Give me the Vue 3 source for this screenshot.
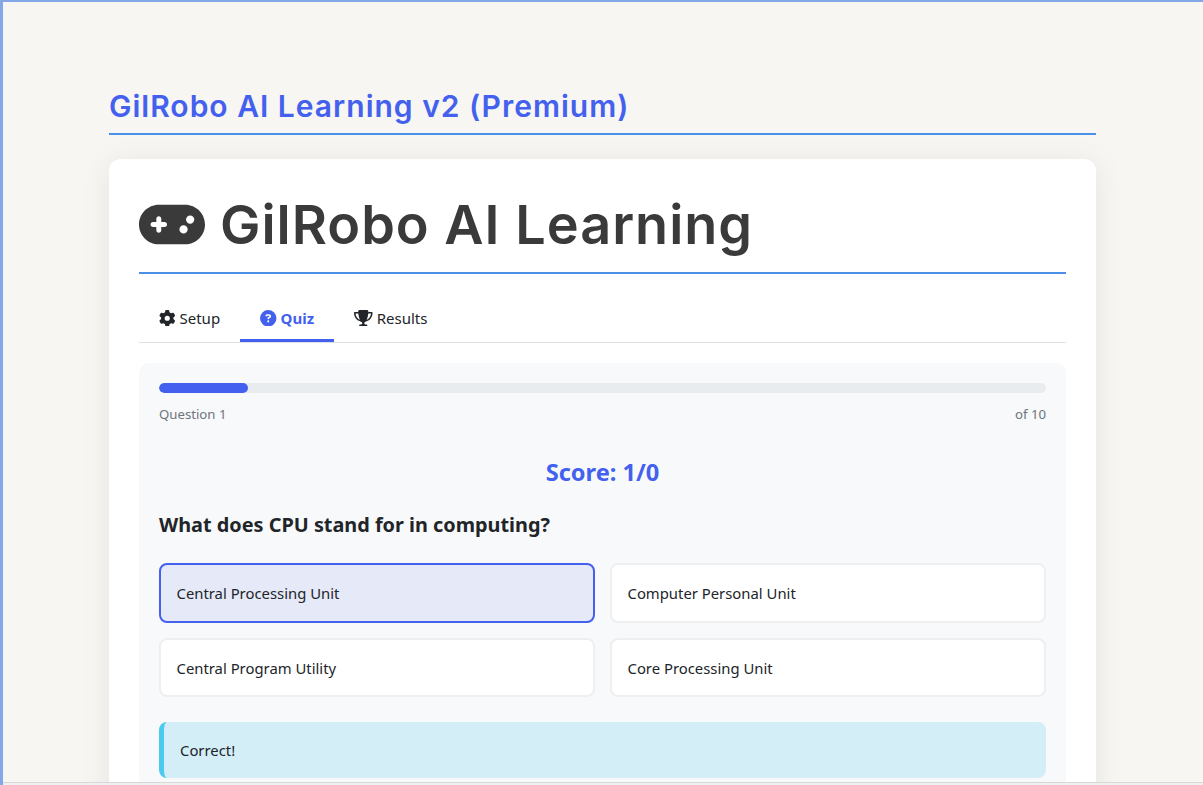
<script setup>
const tabs = [
  { label: 'Setup', vb: '0 0 512 512', d: 'M495.9 166.6c3.2 8.7 .5 18.4-6.4 24.6l-43.3 39.4c1.1 8.3 1.7 16.8 1.7 25.4s-.6 17.1-1.7 25.4l43.3 39.4c6.9 6.2 9.6 15.9 6.4 24.6c-4.4 11.9-9.7 23.3-15.8 34.3l-4.7 8.1c-6.6 11-14 21.4-22.1 31.2c-5.9 7.2-15.7 9.6-24.5 6.8l-55.7-17.7c-13.4 10.3-28.2 18.9-44 25.4l-12.5 57.1c-2 9.1-9 16.3-18.2 17.8c-13.8 2.3-28 3.5-42.5 3.5s-28.7-1.2-42.5-3.5c-9.2-1.5-16.2-8.7-18.2-17.8l-12.5-57.1c-15.8-6.5-30.6-15.1-44-25.4L83.1 425.9c-8.8 2.8-18.6 .3-24.5-6.8c-8.1-9.8-15.5-20.2-22.1-31.2l-4.7-8.1c-6.1-11-11.4-22.4-15.8-34.3c-3.2-8.7-.5-18.4 6.4-24.6l43.3-39.4C64.6 273.1 64 264.6 64 256s.6-17.1 1.7-25.4L22.4 191.2c-6.9-6.2-9.6-15.9-6.4-24.6c4.4-11.9 9.7-23.3 15.8-34.3l4.7-8.1c6.6-11 14-21.4 22.1-31.2c5.9-7.2 15.7-9.6 24.5-6.8l55.7 17.7c13.4-10.3 28.2-18.9 44-25.4l12.5-57.1c2-9.1 9-16.3 18.2-17.8C227.3 1.2 241.5 0 256 0s28.7 1.2 42.5 3.5c9.2 1.5 16.2 8.7 18.2 17.8l12.5 57.1c15.8 6.5 30.6 15.1 44 25.4l55.7-17.7c8.8-2.8 18.6-.3 24.5 6.8c8.1 9.8 15.5 20.2 22.1 31.2l4.7 8.1c6.1 11 11.4 22.4 15.8 34.3zM256 336a80 80 0 1 0 0-160 80 80 0 1 0 0 160z' },
  { label: 'Quiz', active: true, vb: '0 0 512 512', d: 'M256 512A256 256 0 1 0 256 0a256 256 0 1 0 0 512zM169.8 165.3c7.9-22.3 29.1-37.3 52.8-37.3h58.3c34.9 0 63.1 28.3 63.1 63.1c0 22.6-12.1 43.5-31.7 54.8L280 264.4c-.2 13-10.9 23.6-24 23.6c-13.3 0-24-10.7-24-24V250.5c0-8.6 4.6-16.5 12.1-20.8l44.3-25.4c4.7-2.7 7.6-7.7 7.6-13.1c0-8.4-6.8-15.1-15.1-15.1H222.6c-3.4 0-6.4 2.1-7.5 5.3l-.4 1.2c-4.4 12.5-18.2 19-30.6 14.6s-19-18.2-14.6-30.6l.4-1.2zM224 352a32 32 0 1 1 64 0 32 32 0 1 1 -64 0z' },
  { label: 'Results', vb: '0 0 576 512', d: 'M400 0H176c-26.5 0-48.1 21.8-47.1 48.2c.2 5.3 .4 10.6 .7 15.8H24C10.7 64 0 74.7 0 88c0 92.6 33.5 157 78.5 200.7c44.3 43.1 98.3 64.8 138.1 75.8c23.4 6.5 39.4 26 39.4 45.6c0 20.9-17 37.9-37.9 37.9H192c-17.7 0-32 14.3-32 32s14.3 32 32 32H384c17.7 0 32-14.3 32-32s-14.3-32-32-32H357.9C337 448 320 431 320 410.1c0-19.6 15.9-39.2 39.4-45.6c39.9-11 93.9-32.7 138.2-75.8C542.5 245 576 180.6 576 88c0-13.3-10.7-24-24-24H446.4c.3-5.2 .5-10.4 .7-15.8C448.1 21.8 426.5 0 400 0zM48.9 112h84.4c9.1 90.1 29.2 150.3 51.9 190.6c-24.9-11-50.8-26.5-73.2-48.3c-32-31.1-58-76-63-142.3zM464.1 254.3c-22.4 21.8-48.3 37.3-73.2 48.3c22.7-40.3 42.8-100.5 51.9-190.6h84.4c-5.1 66.3-31.1 111.2-63 142.3z' },
]
const options = [
  { text: 'Central Processing Unit', selected: true },
  { text: 'Computer Personal Unit' },
  { text: 'Central Program Utility' },
  { text: 'Core Processing Unit' },
]
const progress = 10
</script>

<template>
  <div class="frame">
    <main class="page">
      <h2 class="app-title">GilRobo AI Learning v2 (Premium)</h2>
      <section class="card">
        <h1 class="hero">
          <svg class="hero-icon" viewBox="0 0 640 512" aria-hidden="true"><path fill="currentColor" d="M192 64C86 64 0 150 0 256S86 448 192 448H448c106 0 192-86 192-192s-86-192-192-192H192zM496 168a40 40 0 1 1 0 80 40 40 0 1 1 0-80zM392 304a40 40 0 1 1 80 0 40 40 0 1 1 -80 0zM168 200c0-13.3 10.7-24 24-24s24 10.7 24 24v32h32c13.3 0 24 10.7 24 24s-10.7 24-24 24H216v32c0 13.3-10.7 24-24 24s-24-10.7-24-24V280H136c-13.3 0-24-10.7-24-24s10.7-24 24-24h32V200z"/></svg>
          <span>GilRobo AI Learning</span>
        </h1>
        <nav class="tabs">
          <a v-for="t in tabs" :key="t.label" class="tab" :class="{ active: t.active }">
            <svg class="tab-icon" :viewBox="t.vb" aria-hidden="true"><path fill="currentColor" :d="t.d"/></svg>
            {{ t.label }}
          </a>
        </nav>
        <div class="panel">
          <div class="track"><div class="fill" :style="{ width: progress + '%' }"></div></div>
          <div class="meta"><span>Question 1</span><span>of 10</span></div>
          <div class="score">Score: 1/0</div>
          <h3 class="question">What does CPU stand for in computing?</h3>
          <div class="options">
            <div v-for="o in options" :key="o.text" class="option" :class="{ selected: o.selected }">{{ o.text }}</div>
          </div>
          <div class="alert">Correct!</div>
        </div>
      </section>
    </main>
    <div class="edge"></div>
  </div>
</template>

<style>
html, body { margin: 0; height: 785px; overflow: hidden; background: #f7f6f2; }
</style>

<style scoped>
.frame {
  box-sizing: border-box;
  height: 785px;
  position: relative;
  overflow: hidden;
  border-top: 2px solid #84a7e8;
  border-left: 3px solid #84a7e8;
  background: #f7f6f2;
  font-family: "Noto Sans", sans-serif;
  color: #212529;
}
.edge {
  position: absolute;
  left: -3px;
  right: 0;
  bottom: 0;
  height: 3px;
  background: #f0f0f0;
  border-top: 1px solid #d8d8d8;
  box-sizing: border-box;
}
.page { width: 987px; margin: 0 0 0 106px; padding-top: 84px; }
.app-title {
  margin: 0 0 24px;
  height: 49px;
  box-sizing: border-box;
  border-bottom: 2px solid #4a90e8;
  font-family: Inter, sans-serif;
  font-size: 30px;
  line-height: 40px;
  font-weight: 600;
  color: #4361ee;
  letter-spacing: 1px;
}
.card {
  background: #fff;
  border-radius: 12px;
  padding: 30px;
  box-shadow: 0 4px 30px rgba(0, 0, 0, 0.08);
}
.hero {
  margin: 0;
  height: 85px;
  box-sizing: border-box;
  border-bottom: 2px solid #4a90e8;
  display: flex;
  align-items: flex-start;
  gap: 15px;
  font-family: Inter, sans-serif;
  font-size: 54px;
  line-height: 72px;
  font-weight: 600;
  color: #3a3a3a;
  letter-spacing: 1px;
}
.hero-icon { width: 66px; height: 53px; margin-top: 9px; }
.tabs { display: flex; margin-top: 20px; border-bottom: 1px solid #dee2e6; height: 48px; }
.tab {
  display: flex;
  align-items: center;
  gap: 4px;
  padding: 0 20px;
  height: 48px;
  box-sizing: border-box;
  font-size: 15px;
  color: #212529;
}
.tab.active { color: #4361ee; font-weight: 700; border-bottom: 3px solid #4361ee; padding-top: 3px; }
.tab-icon { height: 16.5px; width: auto; flex: none; }
.panel {
  margin-top: 20px;
  background: #f8f9fa;
  border-radius: 10px;
  padding: 20px;
  height: 440px;
  box-sizing: border-box;
}
.track { height: 10px; border-radius: 5px; background: #e9ecef; overflow: hidden; }
.fill { height: 100%; background: #4361ee; border-radius: 5px; }
.meta { display: flex; justify-content: space-between; margin-top: 11px; font-size: 13.2px; line-height: 20px; color: #6c757d; }
.score { margin-top: 33px; text-align: center; font-size: 23.6px; line-height: 30px; font-weight: 700; color: #4361ee; }
.question { margin: 23px 0 0; font-size: 19.85px; line-height: 30px; font-weight: 700; color: #212529; }
.options { display: grid; grid-template-columns: 1fr 1fr; gap: 15px; margin-top: 23px; }
.option {
  box-sizing: border-box;
  height: 60px;
  display: flex;
  align-items: center;
  padding: 0 15.5px;
  background: #fff;
  border: 2px solid #eeeff1;
  border-radius: 8px;
  font-size: 14.85px;
}
.option:nth-child(n+3) { height: 59px; }
.option.selected { background: #e6e9f8; border-color: #4361ee; }
.alert {
  margin-top: 25px;
  height: 56px;
  box-sizing: border-box;
  display: flex;
  align-items: center;
  padding-left: 16px;
  background: #d4eef8;
  border-left: 5px solid #4cc9f0;
  border-radius: 8px;
  font-size: 14.85px;
}
</style>
